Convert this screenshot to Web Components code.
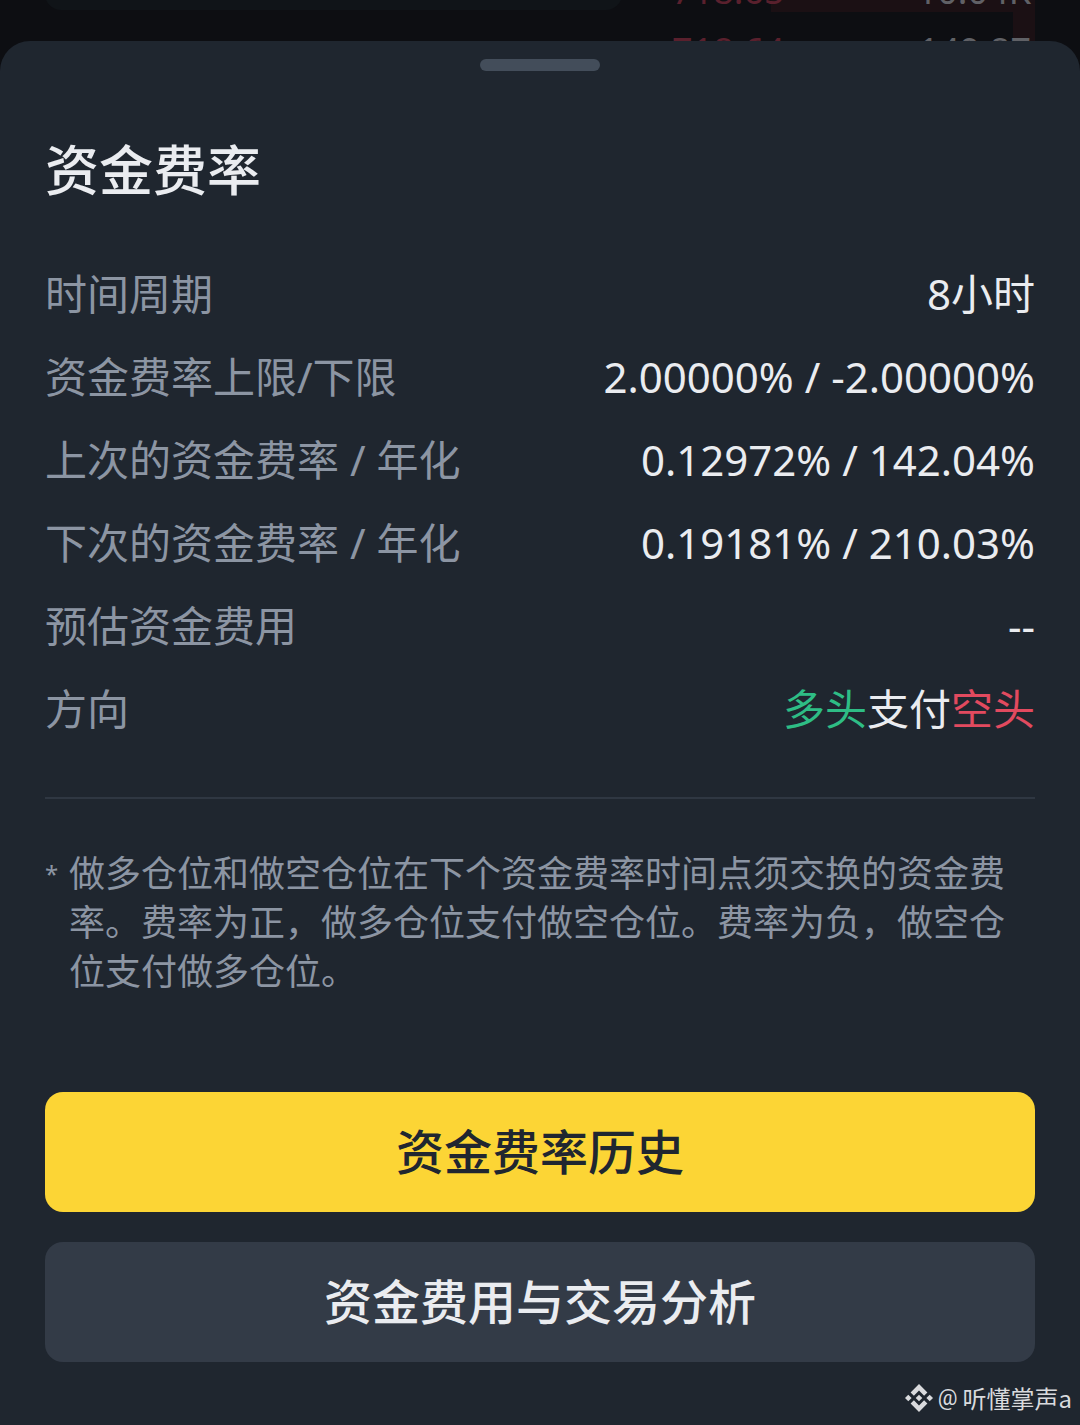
<!DOCTYPE html>
<html lang="zh-CN">
<head>
<meta charset="UTF-8">
<meta name="viewport" content="width=device-width, initial-scale=1">
<title>资金费率</title>
<style>
    body {
        margin: 0;
        background: #0d0e12;
        color: #eaecf0;
        font-family: "Noto Sans", "Noto Sans CJK SC", sans-serif;
    }
    .long { color: #2ebd85; }
    .short { color: #e24a5f; }
</style>
</head>
<body>
<trade-screen>
    <order-book slot="behind"></order-book>
    <bottom-sheet heading="资金费率">
        <info-list>
            <info-row label="时间周期">8小时</info-row>
            <info-row label="资金费率上限/下限">2.00000% / -2.00000%</info-row>
            <info-row label="上次的资金费率 / 年化">0.12972% / 142.04%</info-row>
            <info-row label="下次的资金费率 / 年化">0.19181% / 210.03%</info-row>
            <info-row label="预估资金费用">--</info-row>
            <info-row label="方向"><span class="long">多头</span>支付<span class="short">空头</span></info-row>
        </info-list>
        <foot-note>做多仓位和做空仓位在下个资金费率时间点须交换的资金费率。费率为正，做多仓位支付做空仓位。费率为负，做空仓位支付做多仓位。</foot-note>
        <sheet-button slot="actions" primary>资金费率历史</sheet-button>
        <sheet-button slot="actions">资金费用与交易分析</sheet-button>
    </bottom-sheet>
    <water-mark slot="mark">听懂掌声a</water-mark>
</trade-screen>

<script>
class TradeScreen extends HTMLElement {
    constructor() {
        super();
        this.attachShadow({ mode: 'open' }).innerHTML = `
            <style>
                :host { display: flex; flex-direction: column; position: relative; min-height: 100vh; box-sizing: border-box; padding-top: 41px; }
                .behind { position: absolute; top: 0; left: 0; right: 0; height: 72px; overflow: hidden; }
                .sheet { position: relative; flex: 1; display: flex; }
                .mark { position: absolute; right: 8px; bottom: 9px; }
            </style>
            <div class="behind"><slot name="behind"></slot></div>
            <div class="sheet"><slot></slot></div>
            <div class="mark"><slot name="mark"></slot></div>
        `;
    }
}

// dimmed page under the sheet, only its last rows show
class OrderBook extends HTMLElement {
    constructor() {
        super();
        this.attachShadow({ mode: 'open' });
        this.rows = [
            { price: '718.65', amount: '10.04K', depth: 264 },
            { price: '718.64', amount: '149.87', depth: 22 },
        ];
    }

    connectedCallback() {
        this.shadowRoot.innerHTML = `
            <style>
                :host { display: flex; justify-content: space-between; align-items: flex-end; height: 100%; padding: 0 45px; box-sizing: border-box; }
                .form { width: 577px; height: 60px; margin-bottom: 62px; border-radius: 16px; background: #101418; }
                .asks { width: 363px; }
                .row { display: flex; justify-content: space-between; height: 60px; box-sizing: border-box; padding: 18px 4px 0 0; align-items: center; font-size: 36px; line-height: 42px; color: #606166; background: linear-gradient(#1b1014, #1b1014) right / var(--depth) 100% no-repeat; }
                .price { color: #5a202d; }
            </style>
            <div class="form"></div>
            <div class="asks">
                ${this.rows.map(row => `
                    <div class="row" style="--depth: ${row.depth}px">
                        <span class="price">${row.price}</span>
                        <span>${row.amount}</span>
                    </div>
                `).join('')}
            </div>
        `;
    }
}

class BottomSheet extends HTMLElement {
    constructor() {
        super();
        this.attachShadow({ mode: 'open' });
    }

    connectedCallback() {
        this.shadowRoot.innerHTML = `
            <style>
                :host { display: flex; flex: 1; flex-direction: column; padding: 18px 45px 63px; border-radius: 30px 30px 0 0; background: #1f262f; }
                .grip { align-self: center; width: 120px; height: 12px; border-radius: 6px; background: #434d5a; }
                h2 { margin: 59px 0 42px; font-size: 54px; line-height: 80px; font-weight: 500; }
                .actions { display: flex; flex-direction: column; gap: 30px; margin-top: auto; padding-top: 48px; }
            </style>
            <div class="grip"></div>
            <h2>${this.getAttribute('heading')}</h2>
            <slot></slot>
            <div class="actions"><slot name="actions"></slot></div>
        `;
    }
}

class InfoList extends HTMLElement {
    constructor() {
        super();
        this.attachShadow({ mode: 'open' }).innerHTML = `
            <style>
                :host { display: flex; flex-direction: column; padding-bottom: 47px; border-bottom: 2px solid #2f3742; }
            </style>
            <slot></slot>
        `;
    }
}

class InfoRow extends HTMLElement {
    constructor() {
        super();
        this.attachShadow({ mode: 'open' });
    }

    connectedCallback() {
        this.shadowRoot.innerHTML = `
            <style>
                :host { display: flex; justify-content: space-between; gap: 24px; font-size: 42px; line-height: 83px; }
                .label { color: #8c95a3; }
            </style>
            <span class="label">${this.getAttribute('label')}</span>
            <span><slot></slot></span>
        `;
    }
}

class FootNote extends HTMLElement {
    constructor() {
        super();
        this.attachShadow({ mode: 'open' }).innerHTML = `
            <style>
                :host { display: flex; margin-top: 50px; font-size: 36px; line-height: 49px; color: #8c95a3; }
                .star { flex: none; width: 24px; font-size: 24px; }
            </style>
            <span class="star">*</span>
            <span><slot></slot></span>
        `;
    }
}

class SheetButton extends HTMLElement {
    constructor() {
        super();
        this.attachShadow({ mode: 'open' }).innerHTML = `
            <style>
                :host { display: block; }
                button { width: 100%; height: 120px; padding: 0 24px 6px; border: 0; border-radius: 18px; background: #333b47; color: #eaecf0; font: 500 48px "Noto Sans", "Noto Sans CJK SC", sans-serif; cursor: pointer; }
                :host([primary]) button { background: #fcd535; color: #202630; }
            </style>
            <button type="button"><slot></slot></button>
        `;
    }
}

class WaterMark extends HTMLElement {
    constructor() {
        super();
        this.attachShadow({ mode: 'open' }).innerHTML = `
            <style>
                :host { display: flex; align-items: center; gap: 5px; font: 24px/36px "Noto Sans CJK SC", sans-serif; color: #d9dadd; }
                svg { width: 28px; height: 28px; }
                .at { font-family: Roboto, sans-serif; font-size: 22px; }
            </style>
            <svg viewBox="0 0 28 28" fill="currentColor">
                <path d="M14 0 22.4 8.4 19.1 11.7 14 6.6 8.9 11.7 5.6 8.4Z"/>
                <path d="M14 28 5.6 19.6 8.9 16.3 14 21.4 19.1 16.3 22.4 19.6Z"/>
                <path d="M14 10.7 17.3 14 14 17.3 10.7 14Z"/>
                <path d="M3.3 10.7 6.6 14 3.3 17.3 0 14Z"/>
                <path d="M24.7 10.7 28 14 24.7 17.3 21.4 14Z"/>
            </svg>
            <span class="at">@</span>
            <span><slot></slot></span>
        `;
    }
}

customElements.define('trade-screen', TradeScreen);
customElements.define('order-book', OrderBook);
customElements.define('bottom-sheet', BottomSheet);
customElements.define('info-list', InfoList);
customElements.define('info-row', InfoRow);
customElements.define('foot-note', FootNote);
customElements.define('sheet-button', SheetButton);
customElements.define('water-mark', WaterMark);
</script>
</body>
</html>
